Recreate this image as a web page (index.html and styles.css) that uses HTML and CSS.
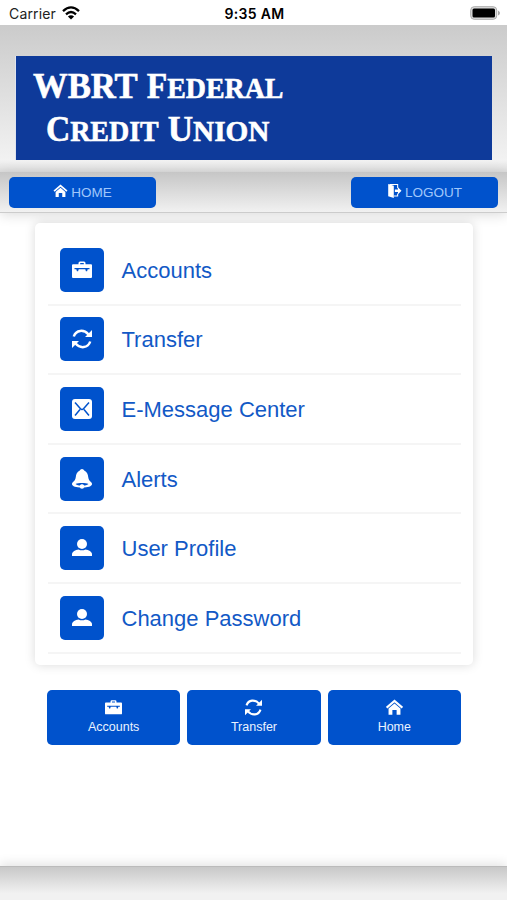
FILE: index.html
```html
<!DOCTYPE html>
<html lang="en">
<head>
    <meta charset="UTF-8">
    <meta name="viewport" content="width=device-width, initial-scale=1.0">
    <title>WBRT Federal Credit Union</title>
    <link rel="stylesheet" href="styles.css">
</head>
<body>
    <!-- Shared icons -->
    <svg class="hidden">
        <symbol id="icon-briefcase" viewBox="0 0 20 20">
            <path fill="currentColor" fill-rule="evenodd" d="M6.500 4.200V3Q6.500 1.500 8 1.500h4q1.500 0 1.500 1.500v1.200H19q1 0 1 1V17q0 1-1 1H1q-1 0-1-1V5.200q0-1 1-1zM8.200 3v1.200h3.600V3zM2.500 8v1.200h1.800l.6 2h1.200l.6-2h6.600l.6 2h1.200l.6-2h1.800V8z"/>
        </symbol>
        <symbol id="icon-refresh" viewBox="0 0 20 20">
            <path fill="none" stroke="currentColor" stroke-width="2.500" d="M1.800 7.500C4 .5 12 .2 16.500 5.500M18.200 12.500C16 19.500 8 19.800 3.500 14.500"/>
            <path fill="currentColor" d="M20 1v7h-7zM0 19v-7h7z"/>
        </symbol>
        <symbol id="icon-mail" viewBox="0 0 20 20">
            <rect width="20" height="20" rx="3" fill="currentColor"/>
            <path fill="none" stroke="#0052cc" stroke-width="1.500" d="M3 3.500l5.500 6.300q1.500 1.500 3 0L17 3.500M3 16.500l5-6M17 16.500l-5-6"/>
        </symbol>
        <symbol id="icon-bell" viewBox="0 0 20 20">
            <path fill="currentColor" fill-rule="evenodd" d="M10 0c1.200 0 1.800.8 2.200 1.500 2.900 1.200 3.700 3.700 4 6.500.3 2.700 1.500 4 3 5.300C21.800 16 18 18.500 10 18.500S-1.800 16 .8 13.300C2.300 12 3.500 10.700 3.800 8c.3-2.800 1.100-5.300 4-6.500C8.200.8 8.800 0 10 0zM3.500 15c1.500 1.300 3.500 1.500 4.800 1.500.4-1 3-1 3.400 0 1.300 0 3.300-.2 4.800-1.500-2.700-1.200-10.300-1.200-13 0z"/>
            <circle cx="10" cy="17.500" r="2.200" fill="currentColor"/>
        </symbol>
        <symbol id="icon-user" viewBox="0 0 20 20">
            <circle cx="10" cy="6" r="5" fill="currentColor"/>
            <path fill="currentColor" d="M0 18v-1.800C0 13.500 3.500 11.900 6.500 11.500q3.500 1.700 7 0c3 .4 6.500 2 6.500 4.700V18z"/>
        </symbol>
        <symbol id="icon-home" viewBox="0 0 20 20">
            <path fill="none" stroke="currentColor" stroke-width="2.500" d="M.8 10.200L10 2.200l9.200 8"/>
            <path fill="currentColor" d="M3 11.300l7-6 7 6V18.500h-4.500V13h-5v5.500H3z"/>
        </symbol>
        <symbol id="icon-logout" viewBox="0 0 20 20">
            <path fill="currentColor" d="M1 0l8 2.500V20l-8-2.500z"/>
            <path fill="none" stroke="currentColor" stroke-width="1.500" d="M3 .8h11.500V6M14.500 13.500V17H9"/>
            <path fill="currentColor" d="M10.500 8h4.500V4.800l5 4.900-5 4.900v-3.200h-4.500z"/>
        </symbol>
    </svg>

    <!-- Status bar -->
    <div class="status-bar">
        <div class="carrier">
            <span>Carrier</span>
            <svg class="wifi" viewBox="0 0 18 14">
                <path fill="none" stroke="#000" stroke-width="2.300" d="M1 5.200q8-7.600 16 0M4 8.300q5-4.600 10 0"/>
                <path d="M9 13.600L5.900 10.500q3.100-2.400 6.200 0z"/>
            </svg>
        </div>
        <div class="time">9:35 AM</div>
        <svg class="battery" viewBox="0 0 30 14">
            <rect x=".7" y=".7" width="26" height="12.600" rx="3.500" fill="#ddd" stroke="#aaa"/>
            <rect x="2.500" y="2.500" width="22.500" height="9" rx="1.500"/>
            <path fill="#aaa" d="M28 4.500q2 1 2 2.500t-2 2.500z"/>
        </svg>
    </div>

    <!-- Logo -->
    <header class="header">
        <svg class="logo" viewBox="0 0 477 104">
            <text x="17" y="41.500" font-size="36" textLength="105" lengthAdjust="spacingAndGlyphs">WBRT</text>
            <text x="131" y="41.500" font-size="36" textLength="137" lengthAdjust="spacingAndGlyphs">F<tspan font-size="30">EDERAL</tspan></text>
            <text x="30" y="85.500" font-size="36" textLength="113" lengthAdjust="spacingAndGlyphs">C<tspan font-size="30">REDIT</tspan></text>
            <text x="152" y="85.500" font-size="36" textLength="102" lengthAdjust="spacingAndGlyphs">U<tspan font-size="30">NION</tspan></text>
        </svg>
    </header>

    <nav class="toolbar">
        <a class="nav-button"><svg><use href="#icon-home"/></svg>HOME</a>
        <a class="nav-button logout"><svg><use href="#icon-logout"/></svg>LOGOUT</a>
    </nav>

    <main class="content">
        <ul class="menu">
            <li><span class="menu-icon"><svg><use href="#icon-briefcase"/></svg></span><span class="menu-label">Accounts</span></li>
            <li><span class="menu-icon"><svg><use href="#icon-refresh"/></svg></span><span class="menu-label">Transfer</span></li>
            <li><span class="menu-icon"><svg><use href="#icon-mail"/></svg></span><span class="menu-label">E-Message Center</span></li>
            <li><span class="menu-icon"><svg><use href="#icon-bell"/></svg></span><span class="menu-label">Alerts</span></li>
            <li><span class="menu-icon"><svg><use href="#icon-user"/></svg></span><span class="menu-label">User Profile</span></li>
            <li><span class="menu-icon"><svg><use href="#icon-user"/></svg></span><span class="menu-label">Change Password</span></li>
        </ul>

        <div class="shortcuts">
            <a class="shortcut"><svg><use href="#icon-briefcase"/></svg>Accounts</a>
            <a class="shortcut"><svg><use href="#icon-refresh"/></svg>Transfer</a>
            <a class="shortcut"><svg><use href="#icon-home"/></svg>Home</a>
        </div>
    </main>

    <footer class="footer"></footer>
</body>
</html>
```
FILE: styles.css
```css
* {
    box-sizing: border-box;
}
body {
    font-family: "Liberation Sans", Arial, sans-serif;
    margin: 0;
    height: 900px;
    display: flex;
    flex-direction: column;
    background: #fff;
    overflow: hidden;
}
.hidden {
    display: none;
}
.status-bar {
    height: 25px;
    padding: 2px 7px 0 9px;
    display: grid;
    grid-template-columns: 1fr auto 1fr;
    align-items: center;
    font-family: Inter, sans-serif;
    font-size: 14px;
    color: #222;
}
.carrier {
    display: flex;
    align-items: center;
    gap: 6px;
    letter-spacing: 0.15px;
}
.wifi {
    width: 18px;
    height: 14px;
    margin-bottom: 2px;
}
.time {
    font-weight: 600;
    letter-spacing: 0.3px;
    color: #000;
}
.battery {
    width: 30px;
    height: 14px;
    margin-bottom: 2px;
    justify-self: end;
}
.header {
    height: 147px;
    padding: 31px 15px 0;
    background: linear-gradient(#cbcbcb, #f2f2f2 92%, #dedede);
}
.logo {
    display: block;
    width: 477px;
    height: 104px;
    background: #0e3a9a;
    border-left: 1px solid #dfe3ee;
    fill: #fff;
    stroke: #fff;
    stroke-width: 0.6px;
    font-family: "Liberation Serif", "Times New Roman", serif;
    font-weight: bold;
}
.toolbar {
    position: relative;
    height: 41px;
    padding: 5px 9px 0;
    display: flex;
    justify-content: space-between;
    background: linear-gradient(#c6c6c6, #f1f1f1);
    border-bottom: 1px solid #ccc;
    box-shadow: 0 2px 12px rgba(0, 0, 0, 0.14);
}
.nav-button {
    width: 147px;
    height: 31px;
    display: flex;
    justify-content: center;
    align-items: center;
    gap: 3px;
    background: #0052cc;
    border-radius: 5px;
    color: #a0c7fb;
    font-size: 13.5px;
}
.nav-button svg {
    width: 15px;
    height: 14px;
    margin-bottom: 3px;
    color: #fff;
}
.content {
    flex: 1;
    padding: 10px 34px 0 35px;
}
.menu {
    position: relative;
    list-style: none;
    margin: 0;
    height: 442px;
    padding: 13px 12px 0 13px;
    background: #fff;
    border-radius: 5px;
    box-shadow: 0 0 11px rgba(0, 0, 0, 0.15);
}
.menu li {
    height: 69.6px;
    padding: 0 11.500px;
    display: flex;
    align-items: center;
    gap: 18px;
    border-bottom: 2px solid #f5f5f5;
    font-size: 22px;
    color: #1259c6;
}
.menu-icon {
    width: 44px;
    height: 44px;
    display: flex;
    align-items: center;
    justify-content: center;
    background: #0052cc;
    border-radius: 5px;
    color: #fff;
}
.menu-icon svg {
    width: 20px;
    height: 20px;
}
.menu-label {
    padding-top: 2px;
}
.shortcuts {
    display: grid;
    grid-template-columns: repeat(3, 1fr);
    gap: 7px;
    margin: 25px 12px 0;
}
.shortcut {
    height: 55px;
    padding-top: 9px;
    display: flex;
    flex-direction: column;
    align-items: center;
    gap: 4px;
    background: #0052cc;
    border-radius: 5px;
    color: #eaf3ff;
    font-size: 12.5px;
}
.shortcut svg {
    width: 17px;
    height: 17px;
    color: #fff;
}
.footer {
    height: 34px;
    background: linear-gradient(#c8c8c8, #f1f1f1 80%);
    border-top: 1px solid #bbb;
    box-shadow: 0 -2px 12px rgba(0, 0, 0, 0.12);
}
```
